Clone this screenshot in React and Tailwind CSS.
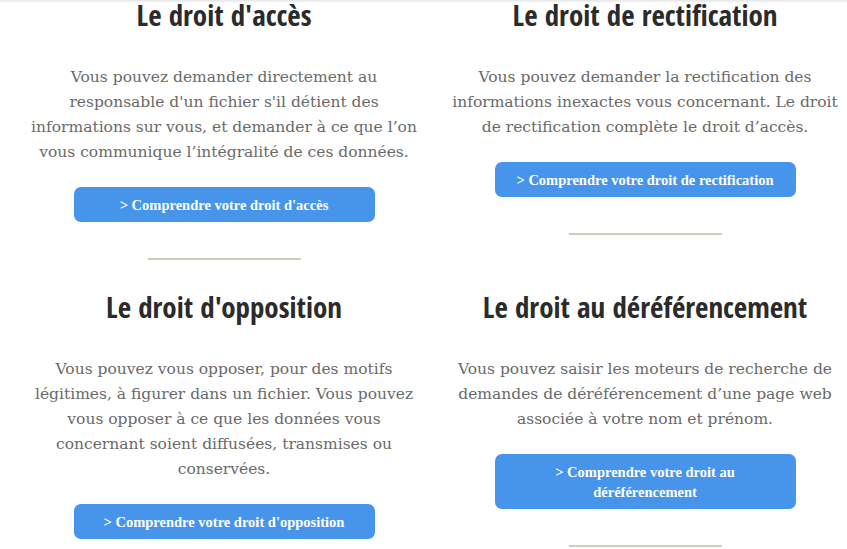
const cells = [
  {
    title: "Le droit d'accès",
    text: "Vous pouvez demander directement au responsable d'un fichier s'il détient des informations sur vous, et demander à ce que l’on vous communique l’intégralité de ces données.",
    button: "> Comprendre votre droit d'accès",
  },
  {
    title: "Le droit de rectification",
    text: "Vous pouvez demander la rectification des informations inexactes vous concernant. Le droit de rectification complète le droit d’accès.",
    button: "> Comprendre votre droit de rectification",
  },
  {
    title: "Le droit d'opposition",
    text: "Vous pouvez vous opposer, pour des motifs légitimes, à figurer dans un fichier. Vous pouvez vous opposer à ce que les données vous concernant soient diffusées, transmises ou conservées.",
    button: "> Comprendre votre droit d'opposition",
  },
  {
    title: "Le droit au déréférencement",
    text: "Vous pouvez saisir les moteurs de recherche de demandes de déréférencement d’une page web associée à votre nom et prénom.",
    button: "> Comprendre votre droit au déréférencement",
  },
];

function Cell({ c }) {
  return (
    <div className="flex flex-col items-center text-center">
      <h2
        className="text-[29px] leading-[34px] font-bold text-[#2b2b2b] mt-[-2px]"
        style={{ fontFamily: '"Open Sans Condensed", "DejaVu Sans Condensed", "Liberation Sans Narrow", "Roboto Condensed", sans-serif', fontStretch: "condensed" }}
      >
        {c.title}
      </h2>
      <p
        className="mt-[33px] px-[4px] text-[15.5px] leading-[25px] text-[#6a6a6a]"
        style={{ fontFamily: '"DejaVu Serif", serif' }}
      >
        {c.text}
      </p>
      <a
        href="#"
        className="mt-[22px] block w-[301px] rounded-[7px] bg-[#4795ea] px-[10px] py-[7.5px] text-[14.5px] font-bold leading-[20px] text-white"
        style={{ fontFamily: '"Liberation Serif", serif' }}
      >
        {c.button}
      </a>
      <div className="mt-[36px] h-[2px] w-[153px] bg-[#cfcab9]" />
    </div>
  );
}

export default function App() {
  return (
    <div className="relative w-[847px] h-[549px] overflow-hidden bg-white">
      <div className="absolute left-0 right-0 top-0 h-[3px] bg-gradient-to-b from-[#e4e4e4] to-white" />
      <div className="grid grid-cols-[400px_400px] gap-x-[21px] gap-y-[32px] pl-[24px] items-start">
        {cells.map((c, i) => (
          <Cell key={i} c={c} />
        ))}
      </div>
    </div>
  );
}
